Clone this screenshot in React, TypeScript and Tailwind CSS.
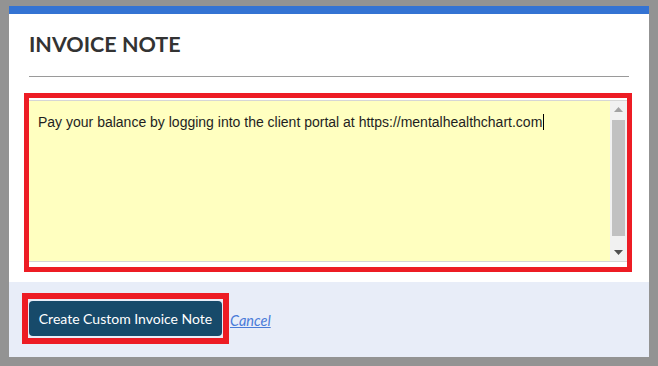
import { useState } from "react";

const noteText =
  "Pay your balance by logging into the client portal at https://mentalhealthchart.com";

function FakeScrollbar() {
  return (
    <div className="flex w-[17px] shrink-0 flex-col items-center bg-[#f1f1f1]">
      <div className="flex h-[17px] w-full items-center justify-center">
        <svg width="9" height="5" viewBox="0 0 9 5">
          <path d="M4.5 0 L9 5 L0 5 Z" fill="#a3a3a3" />
        </svg>
      </div>
      <div className="mt-[2px] h-[116px] w-[13px] bg-[#c1c1c1]" />
      <div className="flex-1" />
      <div className="flex h-[17px] w-full items-center justify-center">
        <svg width="9" height="5" viewBox="0 0 9 5">
          <path d="M0 0 L9 0 L4.5 5 Z" fill="#505050" />
        </svg>
      </div>
    </div>
  );
}

export default function App() {
  const [note] = useState(noteText);

  return (
    <div className="h-[366px] w-[658px] bg-[#939393] pl-[9px] pt-[6px]">
      <div className="flex h-[351px] w-[640px] flex-col bg-white">
        <div className="h-[8px] bg-[#3473d3]" />

        {/* body */}
        <div className="px-[20px] pb-[10px] pt-[17px]">
          <h2 className="font-['Lato',sans-serif] text-[21.5px] font-bold leading-[26px] text-[#333333]">
            INVOICE NOTE
          </h2>
          <div className="mt-[19px] h-px bg-[#9a9a9a]" />

          <div className="-ml-[5px] mt-[16px] w-[608px] border-[5px] border-[#ed1c24] bg-white pb-[5px] pt-[2px]">
            <div className="flex h-[162px] border-y border-[#d6d6d6]">
              <div className="flex-1 bg-[#ffffc0] pl-[9px] pt-[10px] font-['Liberation_Sans',Arial,sans-serif] text-[14px] leading-[16px] text-[#1e1e1e]">
                {note}
                <span className="ml-px inline-block h-[16px] w-px translate-y-[3px] bg-black" />
              </div>
              <FakeScrollbar />
            </div>
          </div>
        </div>

        {/* footer */}
        <div className="flex flex-1 items-start bg-[#e8edf8] pl-[13px] pt-[11px]">
          <div className="border-[6px] border-[#ed1c24] px-[1px] py-[2px]">
            <button className="h-[35px] w-[193px] rounded-[4px] bg-[#174a6a] font-['Lato',sans-serif] text-[14px] text-white">
              Create Custom Invoice Note
            </button>
          </div>
          <a
            href="#"
            className="ml-[1px] mt-[17px] font-['Lato',sans-serif] text-[14.5px] italic text-[#4a7bd8] underline"
          >
            Cancel
          </a>
        </div>
      </div>
    </div>
  );
}
